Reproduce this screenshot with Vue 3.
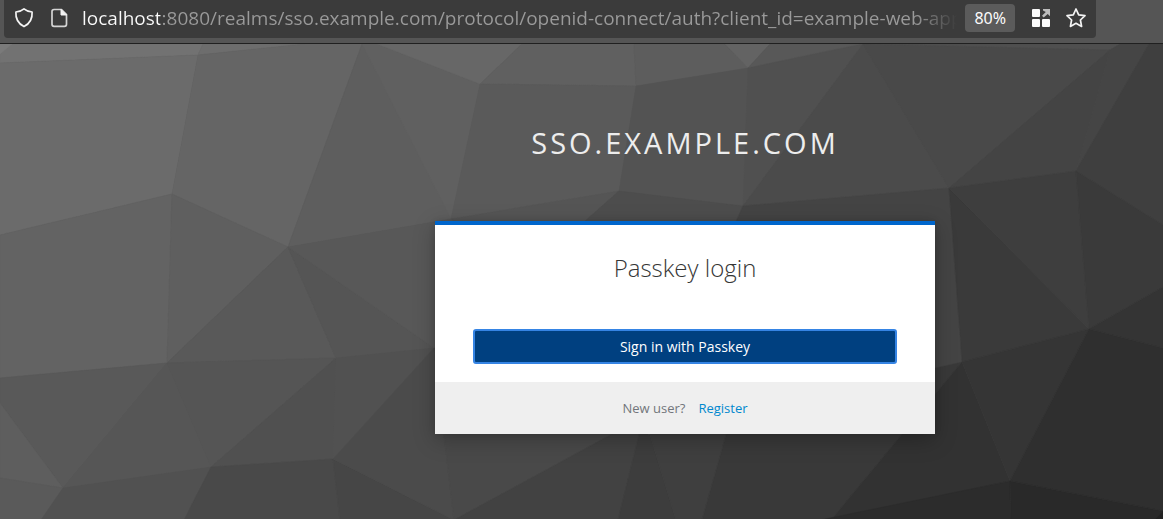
<script setup>
import { ref } from 'vue'

const address = ref('localhost:8080/realms/sso.example.com/protocol/openid-connect/auth?client_id=example-web-app&')

const facets = [
  { points: '0,0 1163,0 1163,519 0,519', fill: '#565656' },
  { points: '0,43 203,43 198,54 0,62', fill: '#727272' },
  { points: '0,43 12,43 0,53', fill: '#7a7a7a' },
  { points: '203,43 305,43 198,54', fill: '#6d6d6d' },
  { points: '0,62 198,54 172,193 0,234', fill: '#6b6b6b' },
  { points: '198,54 305,43 362,43 288,246 172,193', fill: '#656565' },
  { points: '362,43 377,43 480,83 451,218 288,246', fill: '#5e5e5e' },
  { points: '362,43 451,218 480,83 377,43', fill: '#606060' },
  { points: '377,43 522,43 480,83', fill: '#676767' },
  { points: '522,43 634,43 636,85 480,83', fill: '#606060' },
  { points: '634,43 725,43 748,67 636,85', fill: '#5d5d5d' },
  { points: '725,43 770,43 748,67', fill: '#636363' },
  { points: '770,43 863,43 830,49 748,67', fill: '#585858' },
  { points: '480,83 636,85 619,190 451,218', fill: '#5a5a5a' },
  { points: '636,85 748,67 743,205 619,190', fill: '#535353' },
  { points: '748,67 863,43 743,205', fill: '#505050' },
  { points: '863,43 949,187 743,205', fill: '#4b4b4b' },
  { points: '863,43 1120,43 1110,49', fill: '#4f4f4f' },
  { points: '863,43 1110,49 949,187', fill: '#494949' },
  { points: '1110,49 1076,170 949,187', fill: '#444444' },
  { points: '1120,43 1149,43 1076,170 1110,49', fill: '#454545' },
  { points: '1149,43 1163,43 1163,224 1076,170', fill: '#3f3f3f' },
  { points: '0,234 172,193 167,362 0,377', fill: '#636363' },
  { points: '172,193 288,246 167,362', fill: '#5f5f5f' },
  { points: '288,246 336,357 167,362', fill: '#595959' },
  { points: '288,246 434,347 336,357', fill: '#555555' },
  { points: '288,246 451,218 540,300 434,347', fill: '#585858' },
  { points: '451,218 619,190 540,260', fill: '#555555' },
  { points: '619,190 743,205 700,300 540,300 540,260', fill: '#4d4d4d' },
  { points: '743,205 949,187 962,361 900,375 700,300', fill: '#444444' },
  { points: '949,187 1089,328 962,361', fill: '#3a3a3a' },
  { points: '949,187 1076,170 1089,328', fill: '#3e3e3e' },
  { points: '1076,170 1163,224 1163,286 1089,328', fill: '#3a3a3a' },
  { points: '0,377 167,362 63,487 0,402', fill: '#595959' },
  { points: '0,402 63,487 0,477', fill: '#5e5e5e' },
  { points: '0,477 63,487 41,519 0,519', fill: '#5a5a5a' },
  { points: '167,362 211,466 63,487', fill: '#565656' },
  { points: '167,362 336,357 211,466', fill: '#555555' },
  { points: '336,357 333,458 211,466', fill: '#505050' },
  { points: '336,357 434,347 333,458', fill: '#515151' },
  { points: '63,487 211,466 184,519 41,519', fill: '#515151' },
  { points: '211,466 333,458 340,519 184,519', fill: '#494949' },
  { points: '333,458 454,519 340,519', fill: '#464646' },
  { points: '434,347 454,519 333,458', fill: '#4b4b4b' },
  { points: '434,347 700,360 614,432 454,519', fill: '#494949' },
  { points: '614,432 700,360 640,430 618,519 454,519', fill: '#424242' },
  { points: '640,430 650,434 676,519 618,519', fill: '#3d3d3d' },
  { points: '640,420 730,420 702,519 676,519 650,434', fill: '#3f3f3f' },
  { points: '730,420 900,375 962,361 831,519 702,519', fill: '#393939' },
  { points: '962,361 1010,480 831,519', fill: '#323232' },
  { points: '962,361 1089,328 1010,480', fill: '#353535' },
  { points: '1089,328 1163,286 1163,347', fill: '#343434' },
  { points: '1089,328 1163,347 1163,510 1010,480', fill: '#2f2f2f' },
  { points: '1010,480 1011,519 820,519', fill: '#2c2c2c' },
  { points: '1010,480 1163,510 1154,519 1011,519', fill: '#292929' },
  { points: '1163,510 1163,519 1154,519', fill: '#222222' }
]
</script>

<template>
  <div class="browser">
    <header class="toolbar">
      <form class="location" @submit.prevent>
        <button class="tool shield" type="button" aria-label="Tracking protection">
          <svg width="22" height="22" viewBox="0 0 22 22" fill="none" stroke="#f4f4f4" stroke-width="1.7" stroke-linejoin="round">
            <path d="M11 1.9c2.3 1.9 5 3 8.1 3.1.4 5.7-1.5 11.2-8.1 14.6C4.4 16.2 2.5 10.7 2.9 5 6 4.9 8.7 3.8 11 1.9Z" />
          </svg>
        </button>
        <button class="tool" type="button" aria-label="Site information">
          <svg width="22" height="22" viewBox="0 0 22 22" fill="none" stroke="#d4d4d4" stroke-width="1.7" stroke-linejoin="round">
            <path d="M5 2.5h7.500l5 5v9.800a2 2 0 0 1-2 2H5a2 2 0 0 1-2-2V4.500a2 2 0 0 1 2-2Z" />
            <path d="M12 2.500v5.500h5.500Z" fill="#f4f4f4" stroke="#f4f4f4" stroke-width="1" />
          </svg>
        </button>
        <input v-model="address" class="address" type="text" aria-label="Address" spellcheck="false" />
        <button class="zoom" type="button">80%</button>
        <button class="tool" type="button" aria-label="Open application">
          <svg width="22" height="22" viewBox="0 0 22 22">
            <g fill="#fbfbfb">
              <rect x="2" y="2" width="8" height="8" rx="1" />
              <rect x="2" y="12" width="8" height="8" rx="1" />
              <rect x="12" y="12" width="8" height="8" rx="1" />
            </g>
            <path d="M13 2h7v7.200l-2.300-2.300-4 3.600-1.700-1.700 3.800-3.800L13 3.500Z" fill="#bdbdbd" />
          </svg>
        </button>
        <button class="tool" type="button" aria-label="Bookmark this page">
          <svg width="22" height="22" viewBox="0 0 22 22" fill="none" stroke="#f4f4f4" stroke-width="1.7" stroke-linejoin="round">
            <path d="m11 2 2.700 5.800 6.300.8-4.600 4.400 1.200 6.400L11 16.300l-5.600 3.100L6.600 13 2 8.600l6.300-.8Z" />
          </svg>
        </button>
      </form>
    </header>

    <main class="page">
      <svg class="backdrop" viewBox="0 43 1163 475" preserveAspectRatio="xMinYMin slice" aria-hidden="true">
        <polygon v-for="(facet, i) in facets" :key="i" :points="facet.points" :fill="facet.fill" :stroke="facet.fill" stroke-width="0.4" />
      </svg>
      <div class="content">
        <div class="realm">sso.example.com</div>
        <section class="card">
          <h1 class="title">Passkey login</h1>
          <form class="login" @submit.prevent>
            <button class="submit" type="submit">Sign in with Passkey</button>
          </form>
          <footer class="signup">
            <span>New user?</span>
            <a href="#register">Register</a>
          </footer>
        </section>
      </div>
    </main>
  </div>
</template>

<style>
body {
  margin: 0;
  background: #3f3f3f;
}
</style>

<style scoped>
.browser {
  display: flex;
  flex-direction: column;
  min-height: 100vh;
  font-family: "Open Sans", "Noto Sans", sans-serif;
}

.toolbar {
  padding: 0 67px 5px 4px;
  background: #555555;
  border-bottom: 1px solid #202020;
}

.location {
  display: flex;
  align-items: center;
  height: 38px;
  padding: 0 3px 2px 8px;
  box-sizing: border-box;
  background: #3b3b3b;
  border-radius: 0 0 4px 4px;
}

.tool {
  display: flex;
  flex: none;
  align-items: center;
  justify-content: center;
  width: 35px;
  height: 36px;
  padding: 0;
  border: 0;
  background: none;
}

.shield {
  width: 24px;
  margin-right: 6px;
}

.address {
  flex: 1;
  min-width: 0;
  height: 36px;
  margin-left: 5px;
  padding: 0;
  border: 0;
  outline: 0;
  font: 19px/36px "Open Sans", "Noto Sans", sans-serif;
  -webkit-text-fill-color: transparent;
  color: #9a9a9a;
  background: linear-gradient(to right, #fbfbfb 0 78px, #9a9a9a 78px calc(100% - 42px), #9a9a9a00 100%);
  -webkit-background-clip: text;
  background-clip: text;
}

.zoom {
  flex: none;
  height: 28px;
  margin: 0 8px;
  padding: 0 9px;
  border: 0;
  border-radius: 4px;
  background: #5b5b5b;
  color: #fbfbfb;
  font: 16px/28px "Noto Sans", sans-serif;
}

.page {
  position: relative;
  flex: 1;
  overflow: hidden;
}

.backdrop {
  position: absolute;
  inset: 0;
  width: 100%;
  height: 100%;
}

.content {
  position: relative;
  display: flex;
  flex-direction: column;
  align-items: center;
  padding: 77px 0 84px 207px;
}

.realm {
  margin-bottom: 56px;
  color: #ededed;
  font-size: 29px;
  line-height: 44px;
  letter-spacing: 3px;
  text-transform: uppercase;
}

.card {
  width: 100%;
  max-width: 500px;
  box-sizing: border-box;
  border-top: 4px solid #0066cc;
  background: #ffffff;
  box-shadow: 0 6px 20px rgba(3, 3, 3, 0.25), 0 0 6px rgba(3, 3, 3, 0.12);
}

.title {
  margin: 0;
  padding: 26px 38px;
  color: #363636;
  font-size: 24px;
  font-weight: 300;
  line-height: 34px;
  text-align: center;
}

.login {
  padding: 18px 38px;
}

.submit {
  display: block;
  width: 100%;
  height: 35px;
  padding: 0;
  border: 2px solid #3584e4;
  border-radius: 3px;
  background: #004080;
  color: #ffffff;
  font: 14px/30px "Open Sans", sans-serif;
}

.signup {
  display: flex;
  justify-content: center;
  gap: 13px;
  padding: 16px 38px;
  background: #efefef;
  color: #72767b;
  font-size: 13px;
  line-height: 20px;
}

.signup a {
  color: #0088ce;
  text-decoration: none;
}
</style>
